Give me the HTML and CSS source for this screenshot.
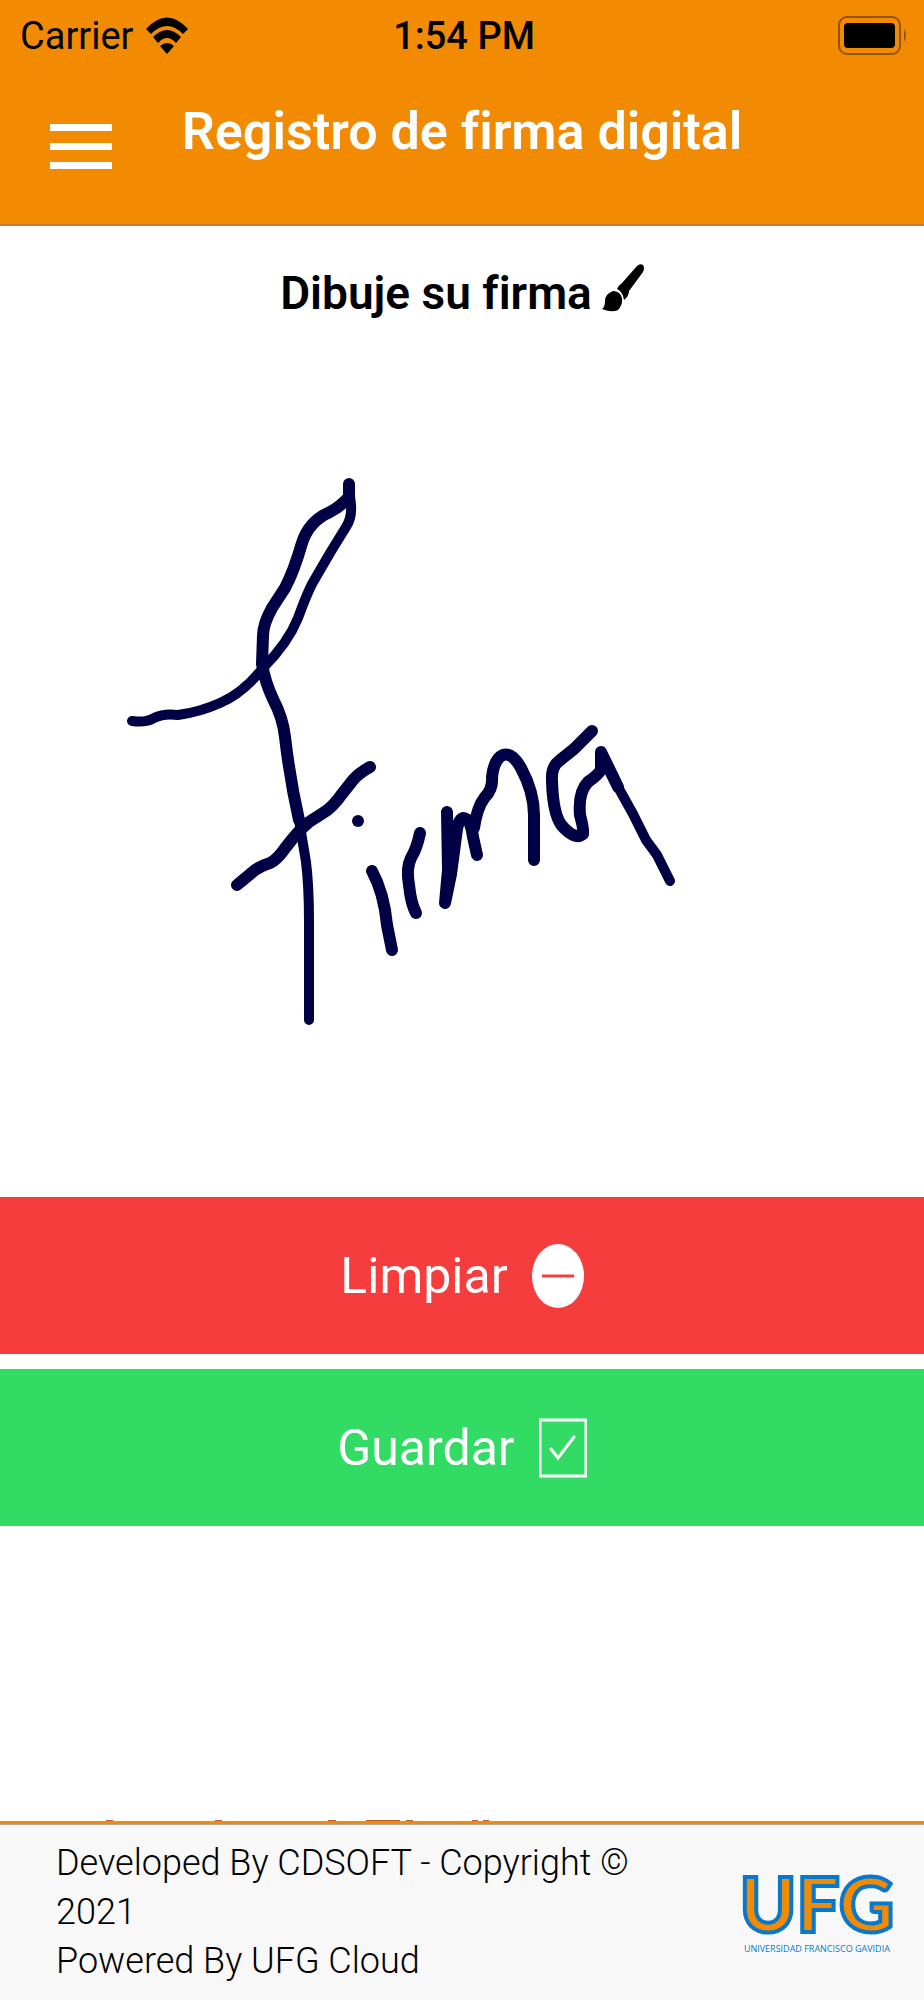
FILE: index.html
```html
<!DOCTYPE html>
<html lang="es">
<head>
    <meta charset="UTF-8">
    <meta name="viewport" content="width=device-width, initial-scale=1.0">
    <title>Registro de firma digital</title>
    <link rel="stylesheet" href="styles.css">
</head>
<body>
    <header class="header">
        <div class="status-bar">
            <div class="carrier">
                <span>Carrier</span>
                <svg class="wifi" viewBox="0 0 44 38" aria-hidden="true">
                    <path d="M1 12Q22 -11 43 12L38 17Q22 1 6 17Z"/>
                    <path d="M8 20Q22 6 36 20L31 26Q22 16 13 26Z"/>
                    <path d="M15 29Q22 23 29 29L22 37Z"/>
                </svg>
            </div>
            <span class="clock">1:54 PM</span>
            <svg class="battery" viewBox="0 0 70 40" aria-hidden="true">
                <rect class="battery-case" x="1" y="1" width="61" height="37" rx="8"/>
                <rect x="6" y="7" width="51" height="25" rx="4"/>
                <path class="battery-tip" d="M66 13Q70 19 66 26Z"/>
            </svg>
        </div>
        <div class="nav-bar">
            <button type="button" class="menu-button" aria-label="Menú">
                <span></span>
                <span></span>
                <span></span>
            </button>
            <h1>Registro de firma digital</h1>
        </div>
    </header>

    <main>
        <h2>
            Dibuje su firma
            <svg class="brush" viewBox="0 0 42 48" aria-hidden="true">
                <path d="M15 25Q17 21 20 19L35 2Q38 -1 41 1Q43 4 41 8L27 27Q27 32 22 36Q21 28 15 25Z"/>
                <path d="M0 45Q3 43 3 37Q3 30 11 27Q18 27 20 34Q21 41 16 46Q10 49 0 45Z"/>
            </svg>
        </h2>

        <svg class="signature" viewBox="0 340 924 857" role="img" aria-label="Firma">
            <path d="M132 721Q146 723 154 718Q164 713 178 715Q200 712 220 703Q243 693 263 668Q288 643 298 618Q306 596 312 584L330 553L346 527Q352 518 351 505L349 486"/>
            <path class="thick" d="M349 484V497Q340 507 330 512Q309 521 302 543Q294 571 285 588L272 608Q263 624 263 636L262 664Q265 682 273 699Q283 718 285 737Q290 780 299 820"/>
            <path d="M299 820L306 862Q309 886 309 922L309 1020"/>
            <path class="thick" d="M237 885L255 870Q263 865 270 863Q277 860 286 847Q299 830 309 822L323 813Q332 808 342 794L353 780Q359 773 370 767"/>
            <circle cx="358" cy="821" r="6"/>
            <path class="thick" d="M372 871Q384 893 387 925L392 950"/>
            <path class="thick" d="M420 833Q417 848 411 858Q406 868 409 885Q411 904 416 913"/>
            <path class="thick" d="M447 812L448 870L445 903L451 874L457 829Q460 815 466 819Q471 822 473 837L477 855"/>
            <path class="thick" d="M474 828Q477 807 485 797Q493 789 492 777Q494 759 503 755Q512 752 521 768Q534 792 534 815L534 860"/>
            <path class="thick" d="M592 731L574 749L559 761Q551 767 552 781Q553 818 564 828Q576 840 583 834Q584 830 580 815Q578 792 588 782Q598 775 601 770L601 752L618 787"/>
            <path d="M601 752L618 787L633 814L646 840L657 855L670 881"/>
        </svg>

        <div class="actions">
            <button type="button" class="action clear">
                <span>Limpiar</span>
                <svg viewBox="0 0 52 64" aria-hidden="true">
                    <ellipse cx="26" cy="32" rx="26" ry="32"/>
                    <path d="M10 32H42"/>
                </svg>
            </button>
            <button type="button" class="action save">
                <span>Guardar</span>
                <svg viewBox="0 0 48 60" aria-hidden="true">
                    <rect x="1" y="2" width="46" height="56"/>
                    <path d="M12 31L19 40L35 19"/>
                </svg>
            </button>
        </div>

        <!-- line of text that scrolls under the footer -->
        <svg class="cut-line" viewBox="0 0 924 1" aria-hidden="true">
            <path d="M106 1h7M215 1h7M328 1h8M366 1h34M406 1h7M472 1h6M483 1h6"/>
        </svg>
    </main>

    <footer class="footer">
        <p>
            Developed By CDSOFT - Copyright © 2021<br>
            Powered By UFG Cloud
        </p>
        <div class="logo">
            <strong>UFG</strong>
            <small>UNIVERSIDAD FRANCISCO GAVIDIA</small>
        </div>
    </footer>
</body>
</html>
```

FILE: styles.css
```css
* {
    box-sizing: border-box;
}
body {
    margin: 0;
    min-height: 100vh;
    display: flex;
    flex-direction: column;
    font-family: Roboto, sans-serif;
    font-variant-ligatures: none;
    background-color: white;
    color: black;
}
button {
    border: 0;
    font: inherit;
    cursor: pointer;
}
.header {
    height: 226px;
    background-color: #f28b02;
    border-bottom: 2px solid #c97a35;
}
.status-bar {
    display: grid;
    grid-template-columns: 1fr auto 1fr;
    align-items: center;
    height: 72px;
    padding: 0 16px 0 20px;
    font-size: 38px;
}
.carrier {
    display: flex;
    align-items: center;
    gap: 12px;
}
.wifi {
    width: 44px;
    height: 38px;
}
.clock {
    font-weight: 500;
}
.battery {
    width: 70px;
    height: 40px;
    justify-self: end;
}
.battery-case {
    fill: none;
    stroke: #935402;
    stroke-width: 2;
}
.battery-tip {
    fill: #935402;
}
.nav-bar {
    display: grid;
    grid-template-columns: 162px 1fr 162px;
    align-items: center;
    height: 120px;
}
.menu-button {
    display: flex;
    flex-direction: column;
    gap: 12px;
    width: 62px;
    margin: 28px 0 0 50px;
    padding: 0;
    background: none;
}
.menu-button span {
    height: 7px;
    background-color: white;
}
h1 {
    margin: 0;
    color: white;
    font-size: 52px;
    line-height: 72px;
    font-weight: 600;
    text-align: center;
}
main {
    flex: 1;
    display: flex;
    flex-direction: column;
}
h2 {
    display: flex;
    justify-content: center;
    align-items: center;
    gap: 10px;
    height: 114px;
    margin: 0;
    padding-top: 20px;
    font-size: 46px;
    font-weight: 600;
}
.brush {
    width: 42px;
    height: 48px;
    margin-bottom: 10px;
}
.signature {
    width: 100%;
    fill: none;
    stroke: #000044;
    stroke-width: 10;
    stroke-linecap: round;
    stroke-linejoin: round;
}
.signature .thick {
    stroke-width: 12;
}
.signature circle {
    fill: #000044;
    stroke: none;
}
.actions {
    display: flex;
    flex-direction: column;
    gap: 15px;
}
.action {
    display: flex;
    justify-content: center;
    align-items: center;
    gap: 24px;
    height: 157px;
    color: white;
    font-size: 50px;
}
.clear {
    background-color: #f63d3d;
}
.clear svg {
    width: 52px;
    height: 64px;
    fill: white;
    stroke: #f63d3d;
    stroke-width: 3;
}
.clear ellipse {
    stroke: none;
}
.save {
    background-color: #32dc64;
}
.save svg {
    width: 48px;
    height: 60px;
    fill: none;
    stroke: white;
    stroke-width: 3;
    stroke-linecap: round;
}
.cut-line {
    width: 100%;
    margin-top: auto;
    stroke: #b5603a;
    stroke-width: 2;
}
.footer {
    display: flex;
    justify-content: space-between;
    align-items: center;
    gap: 40px;
    height: 179px;
    padding: 0 30px 0 56px;
    background-color: #f8f8f8;
    border-top: 3px solid #f28b02;
    box-shadow: inset 0 1px #b9a8a0;
}
.footer p {
    flex: 1;
    max-width: 600px;
    margin: 0;
    font-size: 36px;
    line-height: 49px;
    font-weight: 300;
}
.logo {
    display: flex;
    flex-direction: column;
    align-items: center;
    padding-bottom: 6px;
    font-family: "Open Sans", sans-serif;
    color: #0878cc;
}
.logo strong {
    color: #f28b02;
    font-family: Lato, sans-serif;
    font-size: 76px;
    line-height: 80px;
    font-weight: 900;
    -webkit-text-stroke: 4px #0878cc;
}
.logo small {
    font-size: 9px;
    line-height: 12px;
}
```
